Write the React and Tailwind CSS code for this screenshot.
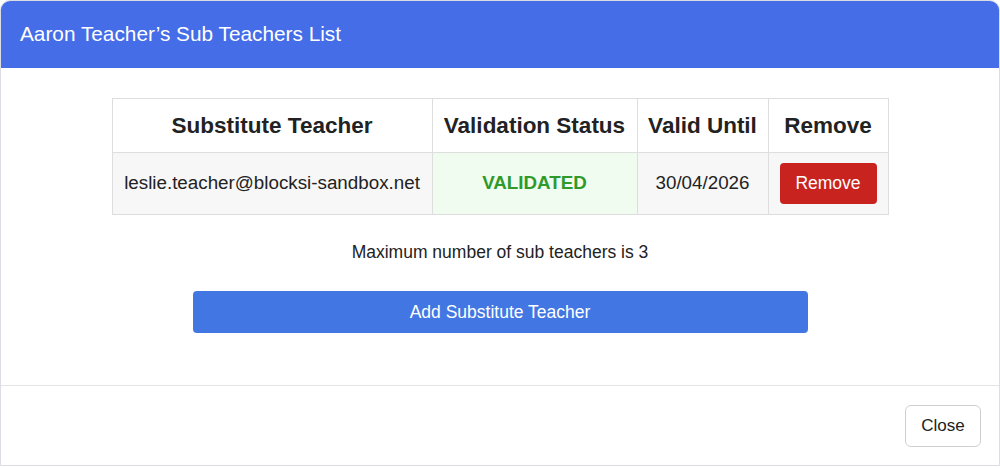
import React from "react";

const subTeachers = [
  {
    email: "leslie.teacher@blocksi-sandbox.net",
    status: "VALIDATED",
    validUntil: "30/04/2026",
  },
];

const MAX_SUB_TEACHERS = 3;

export default function App() {
  return (
    <div className="w-[1000px] h-[468px] bg-white font-['Liberation_Sans',Arial,sans-serif] text-[#222]">
      <div className="h-[466px] flex flex-col rounded-t-[10px] border border-[#dcdde3] overflow-hidden bg-white">
        {/* header */}
        <div className="h-[67px] shrink-0 bg-[#456de7] flex items-center px-[19px]">
          <h1 className="text-white text-[20.8px] leading-none">
            Aaron Teacher’s Sub Teachers List
          </h1>
        </div>

        {/* body */}
        <div className="flex-1 flex flex-col items-center pt-[30px] border-b border-[#e4e4e4]">
          <table className="w-[777px] border-collapse">
            <thead>
              <tr className="h-[54px] text-[22.5px] font-bold text-[#222]">
                <th className="w-[320px] border border-[#dedede]">Substitute Teacher</th>
                <th className="w-[205px] border border-[#dedede]">Validation Status</th>
                <th className="w-[131px] border border-[#dedede]">Valid Until</th>
                <th className="border border-[#dedede]">Remove</th>
              </tr>
            </thead>
            <tbody>
              {subTeachers.map((t) => (
                <tr key={t.email} className="h-[62px] bg-[#f7f7f7] text-[18.8px]">
                  <td className="border border-[#dedede] text-center">{t.email}</td>
                  <td className="border border-[#dedede] text-center bg-[#effcef] text-[#2f9a2a] font-bold">
                    {t.status}
                  </td>
                  <td className="border border-[#dedede] text-center">{t.validUntil}</td>
                  <td className="border border-[#dedede] text-center">
                    <button className="w-[97px] h-[41px] rounded-[4px] bg-[#c8231f] text-white text-[17.5px]">
                      Remove
                    </button>
                  </td>
                </tr>
              ))}
            </tbody>
          </table>

          <p className="mt-[27px] text-[17.5px] leading-[20px] text-[#222]">
            Maximum number of sub teachers is {MAX_SUB_TEACHERS}
          </p>

          <button className="mt-[29px] w-[615px] h-[42px] rounded-[4px] bg-[#4277e3] text-white text-[17.5px]">
            Add Substitute Teacher
          </button>
        </div>

        {/* footer */}
        <div className="h-[79px] shrink-0 flex items-center justify-end pr-[18px]">
          <button className="w-[76px] h-[42px] rounded-[6px] border border-[#cfcfcf] bg-white text-[17px] text-[#222]">
            Close
          </button>
        </div>
      </div>
    </div>
  );
}
